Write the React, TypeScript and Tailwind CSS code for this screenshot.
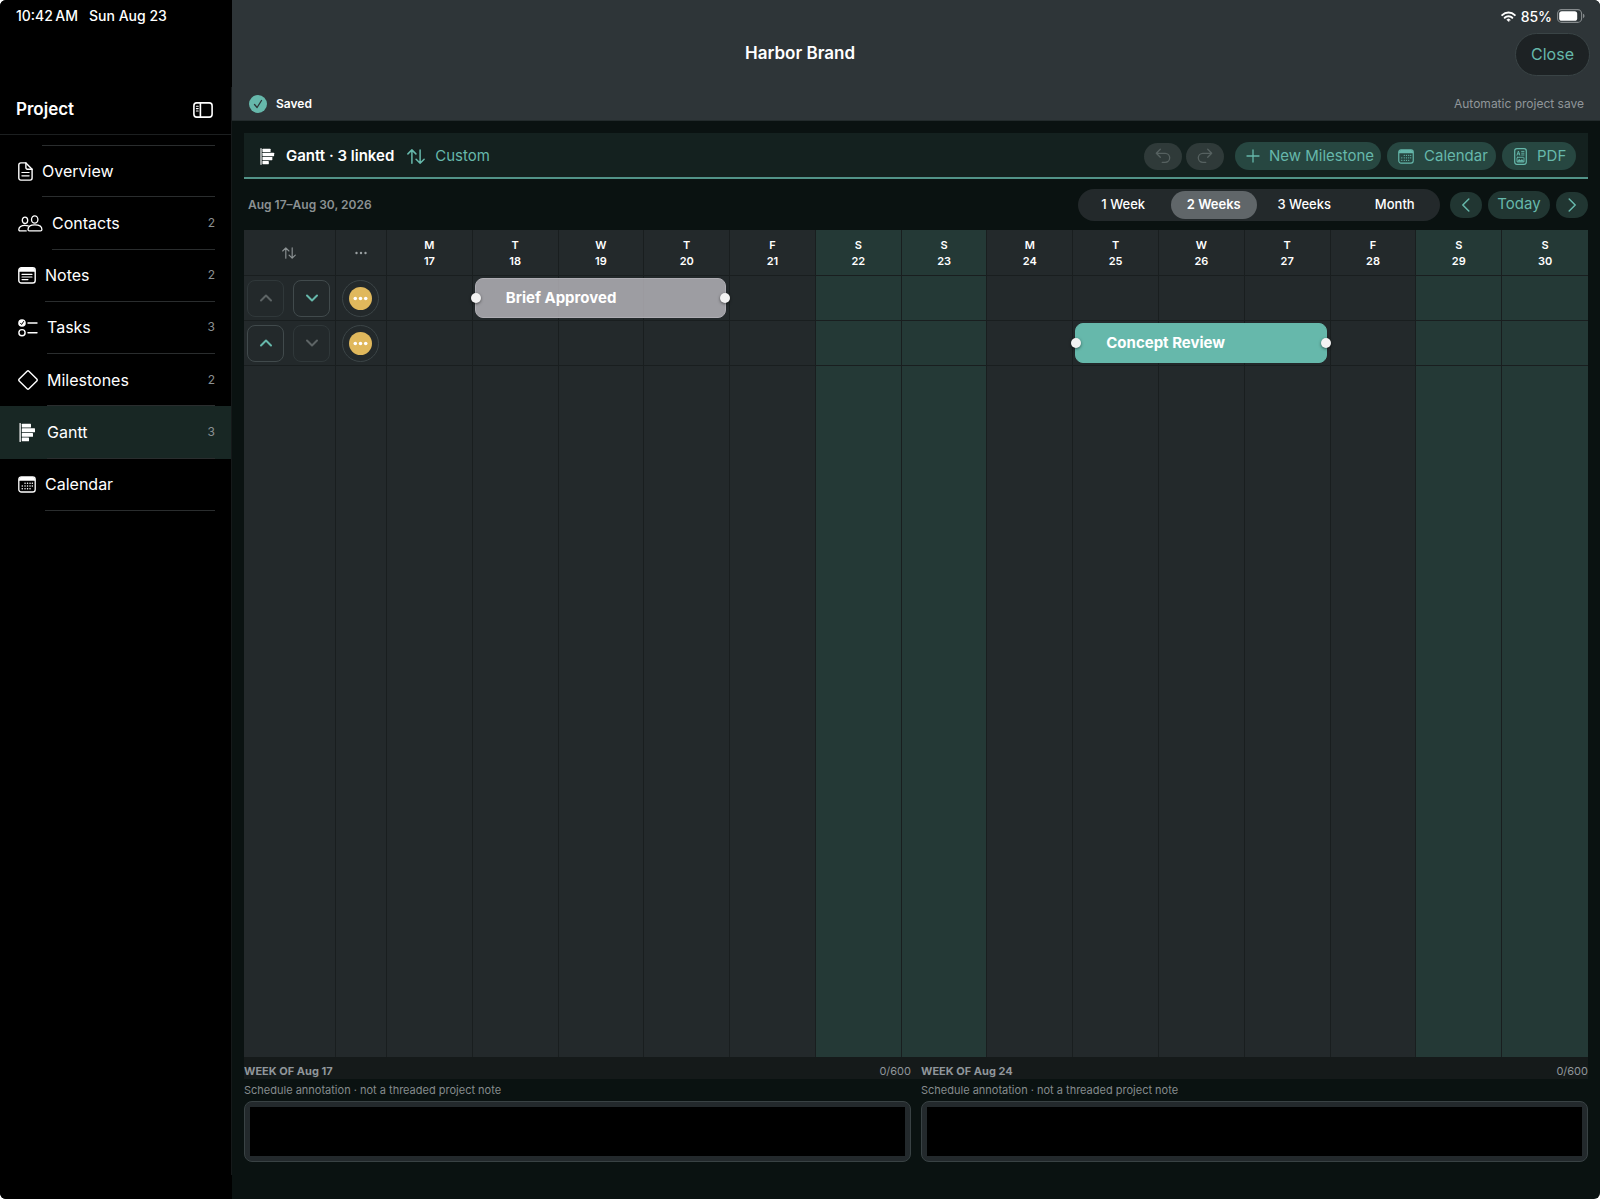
import React from "react";

type IconProps = { className?: string };

const stroke = {
  fill: "none",
  stroke: "currentColor",
  strokeLinecap: "round" as const,
  strokeLinejoin: "round" as const,
};

function SidebarIcon() {
  return (
    <svg width="20" height="16" viewBox="0 0 20 16" {...stroke} strokeWidth="1.6" aria-hidden="true">
      <rect x="0.9" y="0.9" width="18.2" height="14.2" rx="2.8" />
      <path d="M7.4 1v14" />
      <path d="M3.4 4.2h1.8M3.4 6.6h1.8M3.4 9h1.8" strokeWidth="1.1" />
    </svg>
  );
}

function DocIcon() {
  return (
    <svg width="15" height="19" viewBox="0 0 15 19" {...stroke} strokeWidth="1.4" aria-hidden="true">
      <path d="M2.8 0.9h5.1l6.2 6.3v8.9a2 2 0 0 1-2 2H2.8a2 2 0 0 1-2-2V2.9a2 2 0 0 1 2-2z" />
      <path d="M7.9 1v4.7a1.5 1.5 0 0 0 1.5 1.5h4.6" />
      <path d="M3.9 10.5h7.2M3.9 13.8h7.2" strokeWidth="1.2" />
    </svg>
  );
}

function PeopleIcon() {
  return (
    <svg width="25" height="17" viewBox="0 0 25 17" {...stroke} strokeWidth="1.3" aria-hidden="true">
      <ellipse cx="16.7" cy="4.5" rx="3.2" ry="3.7" />
      <path d="M10 14.4c0-2.7 2.8-4.5 6.9-4.5s7 1.8 7 4.5c0 .9-.5 1.5-1.4 1.5H11.4c-.9 0-1.4-.6-1.4-1.5z" />
      <ellipse cx="7" cy="5.3" rx="2.7" ry="3.2" />
      <path d="M8.2 15.9H2c-.8 0-1.2-.5-1.2-1.3 0-2.3 2.5-4.3 6.100-4.300 1.300 0 2.400.2 3.300.6" />
    </svg>
  );
}

function NoteIcon() {
  return (
    <svg width="18" height="17" viewBox="0 0 18 17" {...stroke} strokeWidth="1.4" aria-hidden="true">
      <rect x="0.8" y="0.8" width="16.4" height="15.2" rx="2.6" />
      <path d="M1 3.4A2.5 2.5 0 0 1 3.4 1h11.2A2.5 2.5 0 0 1 17 3.4v1.400H1z" fill="currentColor" stroke="none" />
      <path d="M4 7.400h10M4 10h10M4 12.600h6" strokeWidth="1.1" />
    </svg>
  );
}

function TasksIcon() {
  return (
    <svg width="20" height="18" viewBox="0 0 20 18" {...stroke} strokeWidth="1.4" aria-hidden="true">
      <circle cx="4" cy="4" r="3.8" fill="currentColor" stroke="none" />
      <path d="M2.5 4.2l1.1 1.3 2-3" stroke="#000" strokeWidth="1" />
      <circle cx="4" cy="13.700" r="3.1" />
      <path d="M10 4h9M10 13.700h9" />
    </svg>
  );
}

function DiamondIcon() {
  return (
    <svg width="20" height="20" viewBox="0 0 20 20" {...stroke} strokeWidth="1.4" aria-hidden="true">
      <path d="M9.1 1.2a1.3 1.3 0 0 1 1.8 0l7.9 7.9a1.3 1.3 0 0 1 0 1.8l-7.9 7.9a1.3 1.3 0 0 1-1.8 0L1.2 10.9a1.3 1.3 0 0 1 0-1.8z" />
    </svg>
  );
}

function GanttIcon({ className = "" }: IconProps) {
  return (
    <svg width="17" height="19" viewBox="0 0 17 19" fill="currentColor" className={className} aria-hidden="true">
      <rect x="0.5" y="0" width="1.3" height="19" rx="0.6" />
      <rect x="2.8" y="0.8" width="9.2" height="3.7" rx="0.5" />
      <rect x="2.8" y="5.3" width="13.2" height="3.9" rx="0.5" />
      <rect x="2.8" y="10" width="11.2" height="3.8" rx="0.5" />
      <rect x="2.8" y="14.6" width="7.2" height="3.600" rx="0.5" />
    </svg>
  );
}

function CalendarIcon({ className = "" }: IconProps) {
  return (
    <svg width="18" height="17" viewBox="0 0 18 17" {...stroke} strokeWidth="1.3" className={className} aria-hidden="true">
      <rect x="0.8" y="0.8" width="16.4" height="15.2" rx="2.6" />
      <path d="M1 3.4A2.5 2.5 0 0 1 3.4 1h11.2A2.5 2.5 0 0 1 17 3.4v1.400H1z" fill="currentColor" stroke="none" />
      <path
        d="M7 7.2h.1M9.5 7.2h.1M12 7.2h.1M14.300 7.2h.1M4.200 10h.1M7 10h.1M9.500 10h.1M12 10h.1M14.300 10h.1M4.200 12.800h.1M7 12.800h.1M9.500 12.800h.1M12 12.800h.1"
        strokeWidth="1.4"
      />
    </svg>
  );
}

function SortIcon({ className = "" }: IconProps) {
  return (
    <svg viewBox="0 0 18 15" {...stroke} strokeWidth="1.5" className={className} aria-hidden="true">
      <path d="M4.900 14.200V0.900M0.900 4.900l4-4 4 4M13.100 0.900v13.300M9.100 10.200l4 4 4-4" />
    </svg>
  );
}

function ArrowTurn({ className = "" }: IconProps) {
  return (
    <svg width="16" height="16" viewBox="0 0 16 16" {...stroke} strokeWidth="1.3" className={className} aria-hidden="true">
      <path d="M5.300 1.300L1.300 5.300l4 4M1.300 5.300h8.900a4.500 4.500 0 0 1 0 9H7.200" />
    </svg>
  );
}

function PlusIcon() {
  return (
    <svg width="14" height="14" viewBox="0 0 14 14" {...stroke} strokeWidth="1.3" aria-hidden="true">
      <path d="M7 1v12M1 7h12" />
    </svg>
  );
}

function PdfIcon() {
  return (
    <svg width="13" height="17" viewBox="0 0 13 17" {...stroke} strokeWidth="1.2" aria-hidden="true">
      <rect x="0.7" y="0.7" width="11.600" height="15.600" rx="2.200" />
      <path d="M3 7.200l1.400-4.200 1.400 4.200M3.500 5.900h1.800M7.600 3.400h2.400M7.600 5.200h2.400M7.600 7h2.400" strokeWidth="0.9" />
      <rect x="3" y="9.300" width="7" height="4.600" rx="0.6" strokeWidth="0.9" />
      <path d="M3.200 13.600l2-2.400 1.500 1.400 1.300-1.200 2 2.200z" fill="currentColor" strokeWidth="0.5" />
    </svg>
  );
}

function Chevron({ d, className = "" }: { d: string; className?: string }) {
  return (
    <svg viewBox="0 0 14 14" {...stroke} className={className} aria-hidden="true">
      <path d={d} />
    </svg>
  );
}

const LEFT = "M9.800 1L3.800 7l6 6";
const RIGHT = "M4.200 1l6 6-6 6";
const UP = "M2 9.500l5-5 5 5";
const DOWN = "M2 4.500l5 5 5-5";

const navItems = [
  { label: "Overview", count: "", icon: <DocIcon />, gap: "gap-[9px]" },
  { label: "Contacts", count: "2", icon: <PeopleIcon />, gap: "gap-[9px]" },
  { label: "Notes", count: "2", icon: <NoteIcon />, gap: "gap-[9px]" },
  { label: "Tasks", count: "3", icon: <TasksIcon />, gap: "gap-[9px]" },
  { label: "Milestones", count: "2", icon: <DiamondIcon />, gap: "gap-[9px]" },
  { label: "Gantt", count: "3", icon: <GanttIcon className="ml-px" />, gap: "gap-[11px]" },
  { label: "Calendar", count: "", icon: <CalendarIcon />, gap: "gap-[9px]" },
];

function Sidebar() {
  return (
    <aside className="flex w-[232px] shrink-0 flex-col bg-black">
      <div className="flex h-8 items-center gap-[11px] pl-4 text-[14px] leading-4 font-medium">
        <span>{"10:42\u2009AM"}</span>
        <span>Sun Aug 23</span>
      </div>
      <div className="mt-[55px] mb-6 flex-1 border-r border-[#15191a]">
        <div className="flex h-12 items-center justify-between border-b border-[#1c1f20] pr-[18px] pb-[2px] pl-4">
          <h2 className="text-[17px] font-semibold">Project</h2>
          <button type="button" aria-label="Toggle sidebar">
            <SidebarIcon />
          </button>
        </div>
        <nav className="mt-[10px] grid h-[366px] grid-rows-7">
          {navItems.map((item, i) => (
            <a
              key={item.label}
              href={"#" + item.label.toLowerCase()}
              className={
                "flex pl-[18px] " + item.gap + (item.label === "Gantt" ? " bg-[#182724]" : "")
              }
            >
              <span className="flex items-center">{item.icon}</span>
              <span
                className={
                  "mr-4 flex flex-1 items-center justify-between border-b border-[#2a2d2e]" +
                  (i === 0 ? " border-t" : "")
                }
              >
                <span className="text-base leading-6">{item.label}</span>
                <span className="text-xs text-[#8b9092]">{item.count}</span>
              </span>
            </a>
          ))}
        </nav>
      </div>
    </aside>
  );
}

function TopBar() {
  return (
    <header className="flex h-[121px] flex-col border-b border-[#232b2c] bg-[#2e3538]">
      <div className="flex h-8 items-center justify-end gap-[5px] pr-[15px]">
        <svg width="15" height="11" viewBox="0 0 15 11" {...stroke} strokeWidth="2" aria-label="Wi-Fi">
          <path d="M1.200 4.100a9 9 0 0 1 12.600 0" />
          <path d="M3.700 6.700a5.400 5.400 0 0 1 7.600 0" />
          <path d="M7.500 10.600L5.700 8.700a2.600 2.600 0 0 1 3.600 0z" fill="currentColor" strokeWidth="0.4" />
        </svg>
        <span className="text-[14px] font-medium">85%</span>
        <svg width="28" height="14" viewBox="0 0 28 14" aria-label="Battery">
          <rect x="0.6" y="0.6" width="24" height="12.800" rx="4" fill="none" stroke="#858a8c" strokeWidth="1.1" />
          <rect x="2.200" y="2.200" width="18" height="9.600" rx="2.600" fill="#fff" />
          <path d="M26 4.800c.9.300 1.500 1.200 1.500 2.200s-.6 1.900-1.500 2.200z" fill="#858a8c" />
        </svg>
      </div>
      <div className="flex h-11 items-center">
        <h1 className="flex-1 text-center text-[17px] font-semibold">Harbor Brand</h1>
        <div className="flex w-[232px] justify-end pr-[10px]">
          <button
            type="button"
            className="h-[43px] w-[75px] rounded-full border border-[#3a4446] bg-[#1d2224] text-base text-[#66b8ab]"
          >
            Close
          </button>
        </div>
      </div>
      <div className="flex flex-1 items-center justify-between pt-[11px] pr-4 pl-[17px]">
        <div className="flex items-center gap-[9px]">
          <svg width="18" height="18" viewBox="0 0 18 18" aria-hidden="true">
            <circle cx="9" cy="9" r="9" fill="#66b8ab" />
            <path d="M5.500 9.500l2.600 3 4.400-7" fill="none" stroke="#2e3538" strokeWidth="1.3" strokeLinecap="round" strokeLinejoin="round" />
          </svg>
          <span className="text-xs font-semibold">Saved</span>
        </div>
        <span className="text-xs text-[#90969a]">Automatic project save</span>
      </div>
    </header>
  );
}

function Toolbar() {
  return (
    <div className="flex h-[46px] items-center border-b-2 border-[#529388] bg-[#14211f] pt-[2px] pr-3 pl-4">
      <GanttIcon className="h-[17px] w-[15px]" />
      <h2 className="ml-[11px] text-[15px] font-semibold">Gantt · 3 linked</h2>
      <button type="button" className="ml-[13px] flex items-center gap-[10px] text-[15px] text-[#66b8ab]">
        <SortIcon className="h-[15px] w-[18px]" />
        Custom
      </button>
      <div className="ml-auto flex items-center">
        <button type="button" disabled aria-label="Undo" className="flex h-[27px] w-[38px] items-center justify-center rounded-full bg-[#2f3a39] text-[#566160]">
          <ArrowTurn />
        </button>
        <button type="button" disabled aria-label="Redo" className="ml-1 flex h-[27px] w-[38px] items-center justify-center rounded-full bg-[#2f3a39] text-[#566160]">
          <ArrowTurn className="-scale-x-100" />
        </button>
        <button type="button" className="ml-[11px] flex h-7 w-[146px] items-center gap-[9px] rounded-full bg-[#274741] pl-[11px] text-[15px] whitespace-nowrap text-[#66b8ab]">
          <PlusIcon />
          New Milestone
        </button>
        <button type="button" className="ml-[6px] flex h-7 w-[109px] items-center gap-[10px] rounded-full bg-[#274741] pl-[11px] text-[15px] text-[#66b8ab]">
          <CalendarIcon className="h-[15px] w-4" />
          Calendar
        </button>
        <button type="button" className="ml-[6px] flex h-7 w-[74px] items-center gap-[10px] rounded-full bg-[#274741] pl-3 text-[15px] text-[#66b8ab]">
          <PdfIcon />
          PDF
        </button>
      </div>
    </div>
  );
}

function RangeBar() {
  const ranges = ["1 Week", "2 Weeks", "3 Weeks", "Month"];
  return (
    <div className="flex h-[51px] items-center">
      <p className="pl-1 text-xs font-semibold text-[#8b9193]">Aug 17–Aug 30, 2026</p>
      <div className="ml-auto grid h-8 w-[362px] grid-cols-4 rounded-full bg-[#23292b]">
        {ranges.map((range) => (
          <button
            key={range}
            type="button"
            aria-pressed={range === "2 Weeks"}
            className={
              "m-[2px] rounded-full text-[13px] " +
              (range === "2 Weeks" ? "bg-[#606669] font-semibold" : "font-medium")
            }
          >
            {range}
          </button>
        ))}
      </div>
      <button type="button" aria-label="Previous" className="ml-[10px] flex h-[26px] w-8 items-center justify-center rounded-full bg-[#213632] text-[#66b8ab]">
        <Chevron d={LEFT} className="size-[14px] stroke-[1.5]" />
      </button>
      <button type="button" className="ml-[6px] h-7 w-[62px] rounded-full bg-[#213632] text-[15px] text-[#66b8ab]">
        Today
      </button>
      <button type="button" aria-label="Next" className="ml-[6px] flex h-[26px] w-8 items-center justify-center rounded-full bg-[#213632] text-[#66b8ab]">
        <Chevron d={RIGHT} className="size-[14px] stroke-[1.5]" />
      </button>
    </div>
  );
}

const days = ["M", "T", "W", "T", "F", "S", "S", "M", "T", "W", "T", "F", "S", "S"].map(
  (name, i) => ({ name, date: 17 + i, weekend: name === "S" }),
);

const milestones = [
  { name: "Brief Approved", start: 18, bar: "bg-[#c7c4cb]/75 border-[#aeadb3]", canUp: false, canDown: true },
  { name: "Concept Review", start: 25, bar: "bg-[#66b8ab] border-[#66b8ab]", canUp: true, canDown: false },
];

function MoveButton({ label, d, enabled }: { label: string; d: string; enabled: boolean }) {
  return (
    <button
      type="button"
      aria-label={label}
      disabled={!enabled}
      className={
        "flex size-[37px] items-center justify-center rounded-lg border " +
        (enabled ? "border-[#414a4c] text-[#66b8ab]" : "border-[#30383a] text-[#5d6465]")
      }
    >
      <Chevron d={d} className="size-[14px] stroke-2" />
    </button>
  );
}

function Handle({ side }: { side: string }) {
  return (
    <span
      className={"absolute top-1/2 size-[10px] -translate-y-1/2 rounded-full bg-[#f2f2f2] shadow-[0_1px_3px_rgba(0,0,0,0.5)] " + side}
    />
  );
}

function GanttTable() {
  const line = "border-[#191e1f]";
  const cell = (weekend: boolean) =>
    "border-r last:border-r-0 p-0 " + line + (weekend ? " bg-[#243936]" : " bg-[#23292b]");
  return (
    <div className="grid flex-1">
      <table className="w-full table-fixed border-separate border-spacing-0">
        <colgroup>
          <col className="w-[92px]" />
          <col className="w-[51px]" />
          {days.map((day) => (
            <col key={day.date} />
          ))}
        </colgroup>
        <thead>
          <tr className="h-[46px]">
            <th className={cell(false) + " border-b text-[#8b9193]"} aria-label="Order">
              <div className="pr-[2px]">
                <SortIcon className="mx-auto h-3 w-[14px]" />
              </div>
            </th>
            <th className={cell(false) + " border-b text-[#9aa0a2]"} aria-label="Actions">
              <svg width="12" height="4" viewBox="0 0 12 4" fill="currentColor" className="mx-auto" aria-hidden="true">
                <circle cx="1.500" cy="2" r="1.200" />
                <circle cx="6" cy="2" r="1.200" />
                <circle cx="10.500" cy="2" r="1.200" />
              </svg>
            </th>
            {days.map((day) => (
              <th key={day.date} className={cell(day.weekend) + " border-b text-[11px] leading-4 font-semibold"}>
                {day.name}
                <br />
                {day.date}
              </th>
            ))}
          </tr>
        </thead>
        <tbody>
          {milestones.map((item) => (
            <tr key={item.name} className="h-[45px]">
              <td className={cell(false) + " border-b"}>
                <div className="flex justify-center gap-[9px] pr-[2px]">
                  <MoveButton label={"Move " + item.name + " up"} d={UP} enabled={item.canUp} />
                  <MoveButton label={"Move " + item.name + " down"} d={DOWN} enabled={item.canDown} />
                </div>
              </td>
              <td className={cell(false) + " border-b"}>
                <div className="flex justify-center pr-[2px]">
                  <button
                    type="button"
                    aria-label={item.name + " options"}
                    className="flex size-[37px] items-center justify-center rounded-full border border-[#3c4547]"
                  >
                    <svg width="23" height="23" viewBox="0 0 22 22" aria-hidden="true">
                      <circle cx="11" cy="11" r="11" fill="#e0b85c" />
                      <circle cx="6" cy="11" r="1.700" fill="#fff" />
                      <circle cx="11" cy="11" r="1.700" fill="#fff" />
                      <circle cx="16" cy="11" r="1.700" fill="#fff" />
                    </svg>
                  </button>
                </div>
              </td>
              {days.map((day) => (
                <td key={day.date} className={cell(day.weekend) + " relative border-b"}>
                  {day.date === item.start && (
                    <div
                      className={
                        "absolute inset-y-[2px] left-[2px] z-10 flex w-[calc(300%-3px)] items-center rounded-lg border pl-[30px] text-[15px] font-bold whitespace-nowrap " +
                        item.bar
                      }
                    >
                      {item.name}
                      <Handle side="-left-[5px]" />
                      <Handle side="-right-[5px]" />
                    </div>
                  )}
                </td>
              ))}
            </tr>
          ))}
          <tr>
            <td className={cell(false)} />
            <td className={cell(false)} />
            {days.map((day) => (
              <td key={day.date} className={cell(day.weekend)} />
            ))}
          </tr>
        </tbody>
      </table>
    </div>
  );
}

function WeekNotes() {
  return (
    <div className="mb-[37px] grid grid-cols-2">
      {["Aug 17", "Aug 24"].map((week, i) => (
        <section key={week} className={i === 0 ? "pr-[5px]" : "pl-[5px]"}>
          <div className={"flex h-[22px] items-end justify-between bg-[#151a1a] text-[11px] leading-4 text-[#90969a] " + (i === 0 ? "-mr-[5px] pr-[5px]" : "-ml-[5px] pl-[5px]")}>
            <label htmlFor={"note-" + i} className="font-bold">
              WEEK OF {week}
            </label>
            <span>0/600</span>
          </div>
          <p className="mt-[3px] text-[11px] leading-4 text-[#858b8d]">
            Schedule annotation · not a threaded project note
          </p>
          <div className="mt-[3px] flex h-[61px] rounded-lg border border-[#394244] bg-[#23292c] p-[5px]">
            <textarea id={"note-" + i} maxLength={600} className="block w-full resize-none bg-black p-1 text-xs outline-none" />
          </div>
        </section>
      ))}
    </div>
  );
}

export default function App() {
  return (
    <div className="bg-white">
      <div className="flex min-h-screen overflow-hidden rounded-md bg-[#0a1211] font-['Inter',sans-serif] text-white">
        <Sidebar />
        <div className="flex min-w-0 flex-1 flex-col">
          <TopBar />
          <main className="flex flex-1 flex-col px-3 pt-3">
            <Toolbar />
            <RangeBar />
            <GanttTable />
            <WeekNotes />
          </main>
        </div>
      </div>
    </div>
  );
}
